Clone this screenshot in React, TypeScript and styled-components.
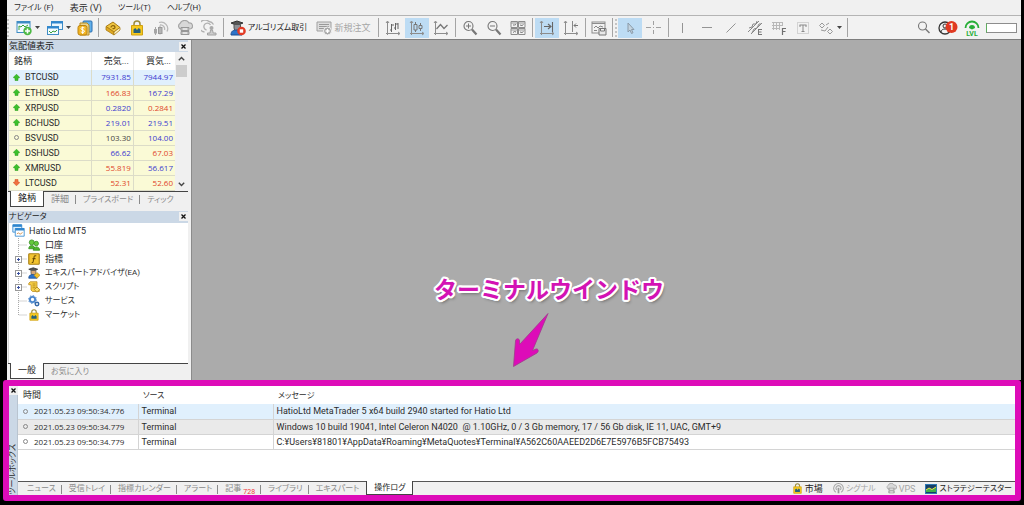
import React from "react";
import styled, { createGlobalStyle, css } from "styled-components";

const C = {
  face: "#f0f0f0",
  title: "#cbd8e6",
  line: "#d4d4d4",
  mute: "#8a8a8a",
  magenta: "#dd0cb8",
  blue: "#3a3ad0",
  red: "#e0452a",
};

const GlobalStyle = createGlobalStyle`
  * { box-sizing: border-box; }
  html, body { margin: 0; background: #000; }
  body, button, table {
    font-family: Roboto, "Noto Sans CJK JP", sans-serif;
    font-size: 9px;
    line-height: 12px;
    color: #2c2c2c;
    font-feature-settings: "palt";
  }
  button { border: 0; padding: 0; background: none; white-space: nowrap; }
  svg { display: block; flex: none; }
  ul { list-style: none; margin: 0; padding: 0; }
`;

const Shell = styled.div`
  display: flex;
  flex-direction: column;
  height: 100vh;
  min-height: 400px;
  padding-bottom: 4px;
  background: #000;
  overflow: hidden;
`;
const Framed = styled.div<{ $grow?: boolean }>`
  margin: 0 3px 0 7px;
  background: ${C.face};
  ${(p) => p.$grow && css`flex: 1; min-height: 0; display: flex;`}
`;
const Kana = styled.span`
  font-size: 8px;
`;
const MenuBar = styled.nav`
  display: flex;
  gap: 16px;
  height: 15px;
  padding: 0 7px;
`;
const MenuItem = styled.button`
  line-height: 14px;
`;
const Toolbar = styled.div`
  display: flex;
  align-items: center;
  height: 25px;
  border-top: 1px solid #b4b4b4;
  border-bottom: 1px solid #7e7e7e;
  background: #f2f2f2;
`;
const Grip = styled.span<{ $gap?: number }>`
  width: 3px;
  height: 18px;
  margin-right: ${(p) => p.$gap ?? 0}px;
  border-left: 2px dotted #c4c4c4;
`;
const Sep = styled.span`
  width: 1px;
  height: 19px;
  margin: 0 2px;
  background: #a4a4a4;
`;
const Tool = styled.button<{ $w?: number; $on?: boolean }>`
  display: flex;
  align-items: center;
  justify-content: center;
  gap: 3px;
  width: ${(p) => p.$w ?? 24}px;
  height: 20px;
  background: ${(p) => (p.$on ? "#bddcf4" : "transparent")};
`;
const TextTool = styled(Tool)<{ $off?: boolean }>`
  gap: 2px;
  color: ${(p) => (p.$off ? "#a6a6a6" : "#222")};
`;
const Spacer = styled.span`
  flex: 1;
`;
const Gauge = styled.div`
  width: 31px;
  height: 10px;
  margin: 0 4px 0 2px;
  border: 1px solid #8d8d8d;
  border-left-color: #5fae5f;
  background: #fff;
`;

const Dock = styled.aside`
  display: flex;
  flex-direction: column;
  width: 185px;
  flex: none;
  padding: 0 3px 1px 1px;
  border-right: 1px solid #8b8b8b;
`;
const PanelTitle = styled.h2`
  display: flex;
  align-items: center;
  justify-content: space-between;
  height: 12px;
  margin: 0;
  padding: 0 0 0 1px;
  font-size: 9px;
  font-weight: 400;
  color: #222;
  background: ${C.title};
`;
const CloseButton = styled.button`
  width: 9px;
  height: 9px;
  display: grid;
  place-items: center;
  background: ${C.face};
`;
const Panel = styled.section<{ $grow?: boolean }>`
  display: flex;
  flex-direction: column;
  min-height: 0;
  margin-bottom: ${(p) => (p.$grow ? 0 : 4)}px;
  ${(p) => p.$grow && css`flex: 1;`}
`;
const PanelBody = styled.div<{ $grow?: boolean }>`
  display: flex;
  background: #fff;
  border-left: 1px solid ${C.line};
  ${(p) => p.$grow && css`flex: 1; min-height: 0;`}
`;
const QuoteTable = styled.table`
  flex: 1;
  table-layout: fixed;
  border-collapse: collapse;
  th, td { padding: 0 2px; height: 15px; line-height: 14px; white-space: nowrap; }
  th { height: 18px; font-weight: 400; text-align: right; border-right: 1px solid #e8e8e8; padding-right: 4px; }
  th:first-child { text-align: left; padding-left: 5px; width: 82px; }
  th:last-child { border-right: 0; }
`;
const QuoteRow = styled.tr<{ $on?: boolean }>`
  background: ${(p) => (p.$on ? "#e0f0fd" : "#fafad6")};
  td { border-bottom: 1px solid #dcdcc8; border-right: 1px solid #dcdcc8; }
  td:last-child { border-right: 0; }
`;
const Price = styled.td<{ $tone: string }>`
  text-align: right;
  font-family: "Open Sans", sans-serif;
  font-size: 8px;
  color: ${(p) => p.$tone};
`;
const WithIcon = styled.span<{ $gap: number; $pad?: number }>`
  display: flex;
  align-items: center;
  gap: ${(p) => p.$gap}px;
  padding-left: ${(p) => p.$pad ?? 0}px;
`;
const ScrollBar = styled.div`
  display: flex;
  flex-direction: column;
  align-items: center;
  width: 13px;
  padding: 4px 0;
  background: ${C.face};
`;
const Thumb = styled.span`
  width: 11px;
  height: 12px;
  margin-top: 4px;
  background: #cdcdcd;
`;
const DockTabs = styled.div`
  display: flex;
  align-items: stretch;
  height: 16px;
  border-top: 1px solid #444;
  padding-left: 2px;
`;
const DockTab = styled.button<{ $on?: boolean; $rule?: boolean }>`
  position: relative;
  padding: 0 7px;
  line-height: 13px;
  color: ${(p) => (p.$on ? "#222" : C.mute)};
  ${(p) =>
    p.$on &&
    css`
      margin-top: -1px;
      background: #fff;
      border: solid #444;
      border-width: 0 1px 1px;
    `}
  ${(p) =>
    p.$rule &&
    css`
      &::after {
        content: "";
        position: absolute;
        right: 0;
        top: 3px;
        height: 9px;
        border-right: 1px solid #8a8a8a;
      }
    `}
`;
const Tree = styled.ul`
  padding: 1px 0 0 3px;
`;
const TreeItem = styled.li<{ $root?: boolean }>`
  display: flex;
  align-items: center;
  gap: ${(p) => (p.$root ? 4 : 5)}px;
  height: 14px;
  line-height: 14px;
`;
const Workspace = styled.main`
  position: relative;
  flex: 1;
  background: #ababab;
`;
const Callout = styled.div`
  position: absolute;
  left: 242px;
  bottom: 12px;
`;
const CalloutText = styled.p`
  margin: 0 0 8px;
  font: 700 23px/32px "Noto Sans CJK JP", sans-serif;
  font-feature-settings: normal;
  color: #d313b4;
  white-space: nowrap;
  text-shadow: 2px 0 #fff, -2px 0 #fff, 0 2px #fff, 0 -2px #fff, 2px 1px #fff, -2px 1px #fff,
    2px -1px #fff, -2px -1px #fff, 1px 2px #fff, -1px 2px #fff, 1px -2px #fff, -1px -2px #fff,
    2px 3px 3px rgba(0, 0, 0, 0.35);
`;
const CalloutArrow = styled.svg`
  margin-left: 76px;
`;

const Toolbox = styled.section`
  display: flex;
  margin: 0 3px;
  height: 121px;
  flex: none;
  border: 6px solid ${C.magenta};
  border-radius: 3px;
  background: #fff;
  overflow: hidden;
`;
const ToolboxRail = styled.div`
  display: flex;
  flex-direction: column;
  justify-content: space-between;
  align-items: center;
  width: 9px;
  background: ${C.title};
  border-right: 1px solid #b9c4d0;
`;
const RailTitle = styled.h2`
  margin: 0;
  font-size: 8px;
  line-height: 8px;
  font-weight: 400;
  writing-mode: vertical-rl;
  text-orientation: sideways;
  transform: rotate(180deg);
  white-space: nowrap;
`;
const ToolboxMain = styled.div`
  flex: 1;
  min-width: 0;
  display: flex;
  flex-direction: column;
  justify-content: space-between;
`;
const LogTable = styled.table`
  width: 100%;
  table-layout: fixed;
  border-collapse: collapse;
  th, td { text-align: left; font-weight: 400; padding: 0 3px; white-space: pre; }
  th { height: 18px; padding-left: 5px; }
  td { height: 15px; line-height: 14px; border-bottom: 1px solid ${C.line}; border-right: 1px solid ${C.line}; }
  td:last-child { border-right: 0; }
`;
const LogRow = styled.tr<{ $bg: string }>`
  background: ${(p) => p.$bg};
  td:first-child { font-family: "Open Sans", sans-serif; font-size: 8px; }
`;
const Col = styled.col<{ $w?: number }>`
  width: ${(p) => (p.$w ? `${p.$w}px` : "auto")};
`;
const ToolboxFoot = styled.div`
  display: flex;
  height: 14px;
  border-top: 1px solid #555;
  background: ${C.face};
  padding-left: 3px;
`;
const FootTab = styled(DockTab)`
  padding: 0 ${(p) => (p.$on ? 7 : 6)}px;
  margin-right: ${(p) => (p.$on ? 0 : 1)}px;
  font-size: 8px;
`;
const Badge = styled.sub`
  margin-left: 2px;
  font-size: 7px;
  line-height: 7px;
  vertical-align: -3px;
  color: #f03a3a;
`;
const StatusLinks = styled.div`
  display: flex;
  gap: 10px;
  margin-left: auto;
  padding-right: 3px;
`;
const StatusLink = styled.button<{ $off?: boolean }>`
  display: flex;
  align-items: center;
  gap: 2px;
  color: ${(p) => (p.$off ? "#a6a6a6" : "#222")};
`;

/* Katakana labels are set one size smaller than kanji and Latin ones. */
const label = (text: string) => (/[ァ-ヶお]/.test(text) ? <Kana>{text}</Kana> : text);

const Svg = ({ w = 16, h = 16, vb, children }: { w?: number; h?: number; vb?: string; children: React.ReactNode }) => (
  <svg width={w} height={h} viewBox={vb ?? `0 0 ${w} ${h}`} fill="none" aria-hidden="true">
    {children}
  </svg>
);
const Caret = () => (
  <Svg w={5} h={3}><path d="M0 0h5L2.500 3z" fill="#444" /></Svg>
);
const Cross = () => (
  <Svg w={5} h={5}><path d="M.5.5l4 4M4.500.5l-4 4" stroke="#111" strokeWidth="1.300" /></Svg>
);
const NewChart = () => (
  <Svg>
    <rect x="1" y="1.500" width="13" height="11" fill="#f4fbff" stroke="#3f8cc4" />
    <path d="M1 2.500h13" stroke="#3f8cc4" strokeWidth="2" />
    <path d="M3 10V6l2 1 2-2 2 2 3-2" stroke="#3aa23a" />
    <circle cx="11.500" cy="11" r="4.200" fill="#4cb944" />
    <path d="M11.500 8.500v5M9 11h5" stroke="#fff" strokeWidth="1.600" />
  </Svg>
);
const Profiles = () => (
  <Svg>
    <rect x="4.500" y="1.500" width="11" height="8" fill="#eaf6fd" stroke="#3f8cc4" />
    <path d="M4 2.500h12" stroke="#2f86cf" strokeWidth="2" />
    <rect x=".5" y="6.500" width="11" height="8" fill="#f4fbff" stroke="#3f8cc4" />
    <path d="M0 7.500h12" stroke="#2f86cf" strokeWidth="2" />
    <path d="M2 11l2 2 2-2 2 1 2-2" stroke="#3aa23a" />
  </Svg>
);
const Coins = () => (
  <Svg>
    <rect x="6" y="1" width="9" height="11" rx="1" fill="#62b0ea" stroke="#2b6fb0" />
    <path d="M3 3h7l2 2v10H3z" fill="#e9d48f" stroke="#b98a1c" />
    <rect x="1" y="5.500" width="9" height="9.500" rx="2" fill="#f2b522" stroke="#bd8310" />
    <path d="M7.500 8c-1-.8-3.500-.8-3.500.7 0 1.700 3.500.8 3.500 2.500 0 1.600-2.700 1.500-3.700.6M5.700 6.500v7.500" stroke="#fff" />
  </Svg>
);
const Ledger = () => (
  <Svg>
    <path d="M1 6.500L8 2l7 5.500-6 4.500z" fill="#f0c540" stroke="#a97b13" />
    <path d="M1 6.500V10l8 5v-3z" fill="#e0a922" stroke="#a97b13" strokeWidth=".8" />
    <path d="M9 12l6-4.500V10l-6 5z" fill="#fff3c4" stroke="#a97b13" strokeWidth=".8" />
    <path d="M6 7.500c0-2.500 4-2.500 4 0 0 1-1.500 1.500-2.500 1" stroke="#8a6209" strokeWidth="1.200" />
  </Svg>
);
const Bag = ({ s = 16 }: { s?: number }) => (
  <Svg w={s} h={s} vb="0 0 16 16">
    <path d="M5 6V4a3 3 0 016 0v2" stroke="#9a8a3a" strokeWidth="1.500" />
    <path d="M2.500 5.500h11V15h-11z" fill="#f5c91f" stroke="#d0a010" />
    <path d="M4.500 13V9.500L6.200 8 8 10l1.800-2 1.700 1.500V13z" fill="#27617a" />
  </Svg>
);
const SignalBars = () => (
  <Svg>
    <path d="M2.500 7v8M7 5.500v9" stroke="#a5a5a5" />
    <rect x="1" y="9" width="3" height="4.500" fill="#a5a5a5" />
    <rect x="5.500" y="7.500" width="3.500" height="6" fill="#b5b5b5" stroke="#999" />
    <path d="M6 2.500a6.500 6.500 0 018 9M7 5a4 4 0 014.500 5" stroke="#b8b8b8" strokeWidth="1.300" />
  </Svg>
);
const Cloud = ({ s = 16 }: { s?: number }) => (
  <Svg w={s} h={s} vb="0 0 16 16">
    <path d="M4 9a3 3 0 01-1-5.500A5 5 0 0112 3a3 3 0 011 6" fill="#d8d8d8" stroke="#a5a5a5" strokeWidth="1.200" />
    <path d="M4 7.500h8v3H4zM4 11.500h8v3H4z" fill="#c4c4c4" stroke="#979797" />
    <path d="M6 9h4M6 13h4" stroke="#fff" />
  </Svg>
);
const Antenna = () => (
  <Svg>
    <path d="M3.500 12A6 6 0 118 1.500a6 6 0 014.500 3M5.500 10a3.500 3.500 0 114-5" stroke="#b0b0b0" strokeWidth="1.300" />
    <circle cx="10.500" cy="8" r="2" fill="#aaa" />
    <path d="M9.500 10h2l.7 3H15v2H6.500v-2H9z" fill="#cdcdcd" stroke="#a2a2a2" />
  </Svg>
);
const Expert = ({ s = 16, stop }: { s?: number; stop?: boolean }) => (
  <Svg w={s} h={s} vb="0 0 16 16">
    <path d="M1 3l6-2 6 2-6 2.500z" fill="#555" stroke="#333" />
    <path d="M4 4.500h6.500V8a3 3 0 01-6.500 0z" fill={stop ? "#8d8f94" : "#d9a877"} stroke="#555" />
    <path d="M1 15c0-4 2-5 6-5s5 1 5 5z" fill="#2c73c9" stroke="#1d4f92" />
    {stop ? (
      <>
        <circle cx="11.500" cy="11" r="4.300" fill="#e23b25" />
        <rect x="9.800" y="9.300" width="3.400" height="3.400" fill="#fff" />
      </>
    ) : (
      <path d="M12 7.500l4 3.500-4 4-4-4z" fill="#f2c12b" stroke="#b98a1c" />
    )}
  </Svg>
);
const NewOrder = () => (
  <Svg>
    <path d="M1 2h14v9H1z" fill="#dedede" stroke="#a0a0a0" />
    <path d="M3 4.500h10M3 6.500h10M3 8.500h6" stroke="#999" />
    <circle cx="11.500" cy="11" r="4" fill="#a8a8a8" stroke="#f2f2f2" />
    <path d="M11.500 9v4M9.500 11h4" stroke="#fff" strokeWidth="1.400" />
  </Svg>
);
const Axes = () => <path d="M2.500 1.500v12h12M1 3l1.500-2L4 3M13 12l2 1.500-2 1.500M1 13.500h1.500V15" stroke="#8c8c8c" />;
const BarChart = () => (
  <Svg><Axes /><path d="M6.500 4v8M5 10h1.500M6.500 5H9M10.500 3v7M9 8h1.500M10.500 4H13M13 3v6" stroke="#666" /></Svg>
);
const CandleChart = () => (
  <Svg><Axes /><path d="M6.500 2v10M11.500 3v8" stroke="#777" /><path d="M5 4.500h3V10H5zM10 5.500h3v3h-3z" fill="#bddcf4" stroke="#777" /></Svg>
);
const LineChart = () => (
  <Svg><Axes /><path d="M3.500 9l4-4.500L11 8.500 14.500 5" stroke="#777" strokeWidth="1.300" /></Svg>
);
const Lens = ({ sign }: { sign?: string }) => (
  <Svg>
    <circle cx="6.500" cy="6" r={sign ? 4.5 : 4} stroke="#777" strokeWidth="1.100" />
    <path d={sign ? "M10 9.500l4.500 5" : "M9.500 9l4 4"} stroke="#777" strokeWidth={sign ? 2.2 : 1.5} />
    {sign && <path d={sign} stroke="#777" />}
  </Svg>
);
const Tile = () => (
  <Svg>
    <path d="M1 1.500h6.500v6H1zM8.500 1.500H15v6H8.500zM1 8.500h6.500v6H1zM8.500 8.500H15v6H8.500z" stroke="#8c8c8c" />
    <path d="M1 3h6M9 3h6M1 10h6M9 10h6" stroke="#999" />
    <path d="M3 5h1.500L6 4.500M10 5l2 .5 1.500-1M3 12.500l1.500-1L6 12M10 12l2 .5 1.500-1" stroke="#777" />
  </Svg>
);
const AutoScroll = () => (
  <Svg><Axes /><path d="M13.500 2v10M5 6.500h7M9 4l3 2.500L9 9" stroke="#666" strokeWidth="1.100" /></Svg>
);
const ChartShift = () => (
  <Svg><Axes /><path d="M9.500 1v11" stroke="#888" /><path d="M15 5.500h-4M13 3.500l-2 2 2 2" stroke="#777" /></Svg>
);
const Template = () => (
  <Svg>
    <rect x="1" y="2" width="13" height="11" stroke="#8c8c8c" />
    <path d="M1 3.500h13" stroke="#8c8c8c" /><path d="M3 8l2-2 2 2 2-2 3 1M3 10.500h3" stroke="#888" />
    <path d="M8 8.500h7V15H8zM9.500 8.500V11h4V8.500" fill="#e8e8e8" stroke="#777" />
  </Svg>
);
const Pointer = () => (
  <Svg><path d="M6 3v9l2-2 1.500 3.500 1.500-.7L9.500 9.500H12z" fill="#c4d4e0" stroke="#8a9aa8" /></Svg>
);
const Crosshair = () => (
  <Svg><path d="M7.500 1v4M7.500 10v4M0 7.500h5M10 7.500h5M7 7.500h1" stroke="#a0a0a0" /></Svg>
);
const Stroke = ({ d }: { d: string }) => (
  <Svg><path d={d} stroke="#949494" /></Svg>
);
const Elliott = () => (
  <Svg>
    <path d="M1 12L12 1M4 14L15 3M2 8l3-1 1-3 3 0 1-3M5 13l2-4 3-1 2-4 2 0" stroke="#888" />
    <path d="M11 9.500h4M11 12h3.500M11 14.500h4M11.500 9v6" stroke="#777" />
  </Svg>
);
const Fibo = () => (
  <Svg>
    <path d="M1 2.500h11M1 5.500h11M1 8.500h8M2.500 2v8M5.500 2v8M8.500 2v8M11.500 2v4" stroke="#b8b8b8" />
    <path d="M11 8.500h4M11 11.500h3.500M11.500 8v7" stroke="#707070" strokeWidth="1.200" />
  </Svg>
);
const TextBox = () => (
  <Svg>
    <rect x="2.500" y="2.500" width="11" height="11" stroke="#b4b4b4" strokeDasharray="1 1" />
    <path d="M4.500 5h7M8 5v7M5 5v2M11 5v2M6.500 11.500h3" stroke="#8a8a8a" />
  </Svg>
);
const Shapes = () => (
  <Svg>
    <path d="M4 3l2.500 2.500L4 8 1.500 5.500zM8 5l3-2M3 10l4 1 3-4M12 9l2.500 2.500L12 14l-2.500-2.500z" stroke="#999" />
  </Svg>
);
const Account = () => (
  <Svg w={22} h={16}>
    <circle cx="8" cy="8" r="6" stroke="#333" strokeWidth="1.300" />
    <circle cx="8" cy="6" r="2" stroke="#333" />
    <path d="M4 12c0-4 8-4 8 0" stroke="#333" />
    <circle cx="14.500" cy="7" r="6" fill="#e03a22" />
    <text x="14.500" y="10" textAnchor="middle" fontSize="9" fontWeight="700" fill="#fff">1</text>
  </Svg>
);
const Level = () => (
  <Svg w={16} h={16}>
    <path d="M1.500 8a6.500 6.500 0 0113 0" stroke="#27ae37" strokeWidth="1.800" />
    <path d="M5 8a3 3 0 016 0L8 9.500z" fill="#27ae37" />
    <text x="8" y="15.500" textAnchor="middle" fontSize="7" fontWeight="700" fill="#27ae37">LVL</text>
  </Svg>
);
const Tick = ({ dir }: { dir: string }) =>
  dir === "none" ? (
    <Svg w={7} h={7}><circle cx="3.500" cy="3.500" r="2" stroke="#888" /></Svg>
  ) : (
    <Svg w={7} h={7}>
      {dir === "up" ? (
        <path d="M3.500.2L6.800 3.500 5 4.200v2.300H2V4.200L.2 3.500z" fill="#3cc02c" stroke="#299a1d" strokeWidth=".5" />
      ) : (
        <path d="M3.500 6.800L6.800 3.500 5 2.800V.5H2v2.300L.2 3.500z" fill="#f0713f" stroke="#cf4a1e" strokeWidth=".5" />
      )}
    </Svg>
  );
const Chevron = ({ up }: { up?: boolean }) => (
  <Svg w={7} h={5}><path d={up ? "M.8 4.200L3.500 1.500l2.700 2.700" : "M.8.8l2.700 2.700L6.200.8"} stroke="#444" strokeWidth="1.400" /></Svg>
);
const Branch = ({ plus, last }: { plus?: boolean; last?: boolean }) => (
  <Svg w={16} h={14}>
    <path d={last ? "M6.500 0v7H15" : "M6.500 0v14M6.500 7H15"} stroke="#aaa" strokeDasharray="1 1" />
    {plus && (
      <>
        <rect x="3.500" y="4.500" width="6" height="6" fill="#fff" stroke="#999" />
        <path d="M5 7.500h3M6.500 6v3" stroke="#3a50a0" />
      </>
    )}
  </Svg>
);
const Terminal = () => (
  <Svg w={13} h={13} vb="0 0 16 16">
    <path d="M1 1h11v9H1z" fill="#dff1fd" stroke="#2f86cf" /><path d="M1 2h11" stroke="#2f86cf" strokeWidth="3" />
    <path d="M4 5.500h11V15H4z" fill="#fff" stroke="#2f86cf" /><path d="M4 6.500h11" stroke="#2f86cf" strokeWidth="3" />
    <path d="M6 12l2-1 2 1.500 3-2" stroke="#d0843a" />
  </Svg>
);
const People = () => (
  <Svg w={12} h={12} vb="0 0 16 16">
    <circle cx="5" cy="4.500" r="3.300" fill="#64c93b" stroke="#2f8a1c" /><path d="M1 13c0-6 8-6 8 0z" fill="#4db52b" stroke="#2f8a1c" />
    <circle cx="11" cy="6" r="3" fill="#64c93b" stroke="#2f8a1c" /><path d="M7 15c0-6 8.500-6 8.500 0z" fill="#4db52b" stroke="#2f8a1c" />
  </Svg>
);
const Func = () => (
  <Svg w={12} h={12} vb="0 0 16 16">
    <rect x="1" y="1" width="14" height="14" rx="1" fill="#f3c531" stroke="#a87f14" strokeWidth="1.500" />
    <path d="M11 4c-2-1-3 0-3 2l-1 5c0 1.500-1 2-2 1.500M6 7.500h4" stroke="#6b4d05" strokeWidth="1.400" />
  </Svg>
);
const Scroll = () => (
  <Svg w={12} h={12} vb="0 0 16 16">
    <path d="M3 1h9v10h3v3H6l-2-2V5H1V3z" fill="#f5cf49" stroke="#b98a1c" /><path d="M6 4h4M6 6.500h4M6 9h4" stroke="#a87f14" />
    <path d="M12 8l3.500 3.500L12 15l-3.500-3.500z" fill="#f8dc6a" stroke="#a87f14" />
  </Svg>
);
const Gears = () => (
  <Svg w={12} h={12} vb="0 0 16 16">
    <circle cx="6" cy="6" r="3.500" stroke="#4a86cc" strokeWidth="2.500" />
    <circle cx="6" cy="6" r="5.300" stroke="#4a86cc" strokeWidth="1.200" strokeDasharray="2 2.100" />
    <circle cx="12" cy="12" r="2.300" stroke="#3569a8" strokeWidth="2" fill="#fff" />
  </Svg>
);
const SignalDot = () => (
  <Svg w={11} h={11} vb="0 0 16 16">
    <path d="M4 13.500a7 7 0 118 0M5.500 10a3.500 3.500 0 115 0" stroke="#a6a6a6" strokeWidth="1.500" />
    <path d="M8 7v8" stroke="#999" strokeWidth="2.500" />
  </Svg>
);
const Tester = () => (
  <Svg w={12} h={10}>
    <rect x=".5" y=".5" width="11" height="9" fill="#173f66" stroke="#2f79b5" />
    <path d="M1 8V6l3-2 3 1.500L11 3v5z" fill="#3fae49" /><path d="M1 6l3-2 3 1.500L11 3" stroke="#f0e04a" />
  </Svg>
);

const K = "#444";
const quotes: [string, string, string, string, string, string][] = [
  ["up", "BTCUSD", "7931.85", C.blue, "7944.97", C.blue],
  ["up", "ETHUSD", "166.83", C.red, "167.29", C.blue],
  ["up", "XRPUSD", "0.2820", C.blue, "0.2841", C.red],
  ["up", "BCHUSD", "219.01", C.blue, "219.51", C.blue],
  ["none", "BSVUSD", "103.30", K, "104.00", C.blue],
  ["up", "DSHUSD", "66.62", C.blue, "67.03", C.red],
  ["up", "XMRUSD", "55.819", C.red, "56.617", C.blue],
  ["down", "LTCUSD", "52.31", C.red, "52.60", C.red],
];
const tree = [
  { label: "口座", icon: <People /> },
  { label: "指標", icon: <Func />, plus: true },
  { label: "エキスパートアドバイザ(EA)", icon: <Expert s={12} />, plus: true },
  { label: "スクリプト", icon: <Scroll />, plus: true },
  { label: "サービス", icon: <Gears /> },
  { label: "マーケット", icon: <Bag s={12} /> },
];
const logs = [
  ["2021.05.23 09:50:34.776", "HatioLtd MetaTrader 5 x64 build 2940 started for Hatio Ltd", "#e0f0fd"],
  ["2021.05.23 09:50:34.779", "Windows 10 build 19041, Intel Celeron N4020  @ 1.10GHz, 0 / 3 Gb memory, 17 / 56 Gb disk, IE 11, UAC, GMT+9", "#eaeaea"],
  ["2021.05.23 09:50:34.779", "C:¥Users¥81801¥AppData¥Roaming¥MetaQuotes¥Terminal¥A562C60AAEED2D6E7E5976B5FCB75493", "#fff"],
];
const footTabs = ["ニュース", "受信トレイ", "指標カレンダー", "アラート", "記事", "ライブラリ", "エキスパート"];

export default function App() {
  return (
    <Shell>
      <GlobalStyle />
      <Framed>
        <MenuBar>
          {["ファイル (F)", "表示 (V)", "ツール(T)", "ヘルプ(H)"].map((m) => (
            <MenuItem key={m}>{label(m)}</MenuItem>
          ))}
        </MenuBar>
        <Toolbar role="toolbar">
          <Grip $gap={2} />
          <Tool $w={31} aria-label="New chart"><NewChart /><Caret /></Tool>
          <Tool $w={31} aria-label="Profiles"><Profiles /><Caret /></Tool>
          <Tool $w={22} aria-label="Symbols"><Coins /></Tool>
          <Sep />
          <Tool aria-label="Ledger"><Ledger /></Tool>
          <Tool aria-label="Market"><Bag /></Tool>
          <Tool aria-label="Signals"><SignalBars /></Tool>
          <Tool aria-label="VPS"><Cloud /></Tool>
          <Tool aria-label="Broadcast"><Antenna /></Tool>
          <Sep />
          <TextTool $w={85}><Expert stop />{label("アルゴリズム取引")}</TextTool>
          <TextTool $w={65} $off><NewOrder />新規注文</TextTool>
          <Sep />
          <Tool aria-label="Bars"><BarChart /></Tool>
          <Tool $on aria-label="Candles"><CandleChart /></Tool>
          <Tool aria-label="Line"><LineChart /></Tool>
          <Sep />
          <Tool aria-label="Zoom in"><Lens sign="M4 6h5M6.500 3.500v5" /></Tool>
          <Tool aria-label="Zoom out"><Lens sign="M4 6h5" /></Tool>
          <Tool aria-label="Tile"><Tile /></Tool>
          <Sep />
          <Tool $on aria-label="Auto scroll"><AutoScroll /></Tool>
          <Tool aria-label="Chart shift"><ChartShift /></Tool>
          <Sep />
          <Tool $w={22} aria-label="Templates"><Template /></Tool>
          <Sep />
          <Grip />
          <Tool $on aria-label="Cursor"><Pointer /></Tool>
          <Tool aria-label="Crosshair"><Crosshair /></Tool>
          <Sep />
          <Tool aria-label="Vertical line"><Stroke d="M7.500 3v10" /></Tool>
          <Tool aria-label="Horizontal line"><Stroke d="M3 7.500h10" /></Tool>
          <Tool aria-label="Trend line"><Stroke d="M3.500 12.500l9-9" /></Tool>
          <Tool aria-label="Channel"><Elliott /></Tool>
          <Tool aria-label="Fibonacci"><Fibo /></Tool>
          <Tool aria-label="Text"><TextBox /></Tool>
          <Tool $w={30} aria-label="Shapes"><Shapes /><Caret /></Tool>
          <Sep />
          <Spacer />
          <Tool aria-label="Search"><Lens /></Tool>
          <Tool aria-label="Account"><Account /></Tool>
          <Tool aria-label="Level"><Level /></Tool>
          <Gauge />
        </Toolbar>
      </Framed>

      <Framed $grow>
        <Dock>
          <Panel>
            <PanelTitle>気配値表示<CloseButton aria-label="Close"><Cross /></CloseButton></PanelTitle>
            <PanelBody>
              <QuoteTable>
                <thead>
                  <tr><th>銘柄</th><th>売気...</th><th>買気...</th></tr>
                </thead>
                <tbody>
                  {quotes.map(([dir, name, bid, bt, ask, at], i) => (
                    <QuoteRow key={name} $on={i === 0}>
                      <td><WithIcon $gap={5} $pad={2}><Tick dir={dir} />{name}</WithIcon></td>
                      <Price $tone={bt}>{bid}</Price>
                      <Price $tone={at}>{ask}</Price>
                    </QuoteRow>
                  ))}
                </tbody>
              </QuoteTable>
              <ScrollBar><Chevron up /><Thumb /><Spacer /><Chevron /></ScrollBar>
            </PanelBody>
            <DockTabs role="tablist">
              <DockTab role="tab" $on>銘柄</DockTab>
              <DockTab role="tab" $rule>詳細</DockTab>
              <DockTab role="tab" $rule>{label("プライスボード")}</DockTab>
              <DockTab role="tab">{label("ティック")}</DockTab>
            </DockTabs>
          </Panel>
          <Panel $grow>
            <PanelTitle>{label("ナビゲータ")}<CloseButton aria-label="Close"><Cross /></CloseButton></PanelTitle>
            <PanelBody $grow>
              <Tree>
                <TreeItem $root><Terminal />Hatio Ltd MT5</TreeItem>
                {tree.map((t, i) => (
                  <TreeItem key={t.label}>
                    <WithIcon $gap={0}><Branch plus={t.plus} last={i === tree.length - 1} />{t.icon}</WithIcon>
                    {label(t.label)}
                  </TreeItem>
                ))}
              </Tree>
            </PanelBody>
            <DockTabs role="tablist">
              <DockTab role="tab" $on>一般</DockTab>
              <DockTab role="tab">{label("お気に入り")}</DockTab>
            </DockTabs>
          </Panel>
        </Dock>
        <Workspace>
          <Callout>
            <CalloutText>ターミナルウインドウ</CalloutText>
            <CalloutArrow width="40" height="56" viewBox="0 0 40 56">
              <path d="M38 1.500L22.500 38.500l3.500-1.500c2.500-.5 3 2.500 1 4L3.500 54.500 5.500 29c.3-3 4-3 4 0v3.500z" fill={C.magenta} stroke="#a03a8c" strokeWidth=".8" />
            </CalloutArrow>
          </Callout>
        </Workspace>
      </Framed>

      <Toolbox>
        <ToolboxRail>
          <CloseButton aria-label="Close"><Cross /></CloseButton>
          <RailTitle>ツールボックス</RailTitle>
        </ToolboxRail>
        <ToolboxMain>
          <LogTable>
            <colgroup><Col $w={120} /><Col $w={135} /><Col /></colgroup>
            <thead>
              <tr><th>時間</th><th>{label("ソース")}</th><th>{label("メッセージ")}</th></tr>
            </thead>
            <tbody>
              {logs.map(([time, msg, bg]) => (
                <LogRow key={msg} $bg={bg}>
                  <td><WithIcon $gap={5} $pad={1}><Tick dir="none" />{time}</WithIcon></td>
                  <td>Terminal</td>
                  <td>{msg}</td>
                </LogRow>
              ))}
            </tbody>
          </LogTable>
          <ToolboxFoot>
            {footTabs.map((t, i) => (
              <FootTab key={t} $rule={i < footTabs.length - 1}>
                {t}
                {t === "記事" && <Badge>728</Badge>}
              </FootTab>
            ))}
            <FootTab $on>操作ログ</FootTab>
            <StatusLinks>
              <StatusLink><Bag s={11} />市場</StatusLink>
              <StatusLink $off><SignalDot />{label("シグナル")}</StatusLink>
              <StatusLink $off><Cloud s={11} />VPS</StatusLink>
              <StatusLink><Tester />{label("ストラテジーテスター")}</StatusLink>
            </StatusLinks>
          </ToolboxFoot>
        </ToolboxMain>
      </Toolbox>
    </Shell>
  );
}
